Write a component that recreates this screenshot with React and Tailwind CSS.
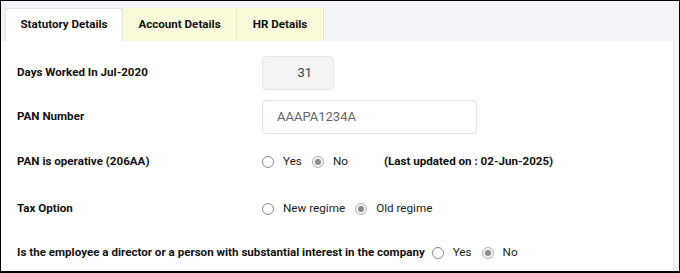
import React from 'react';

const Radio = ({ checked }) => (
  <span
    className={`inline-flex items-center justify-center w-[12px] h-[12px] rounded-full border ${
      checked ? 'border-[#b5b5b5] bg-[#f2f2f2]' : 'border-[#8a8a8a] bg-white'
    }`}
  >
    {checked && <span className="w-[6px] h-[6px] rounded-full bg-[#8d8d8d]" />}
  </span>
);

const RadioGroup = ({ options, value }) => (
  <div className="flex items-center">
    {options.map((opt, i) => (
      <label key={opt} className={`flex items-center gap-[9px] ${i > 0 ? 'ml-[10px]' : ''}`}>
        <Radio checked={opt === value} />
        <span className="text-[11.7px] text-[#222]">{opt}</span>
      </label>
    ))}
  </div>
);

const Row = ({ label, children, className = '' }) => (
  <div className={`flex items-center ${className}`}>
    <div className="w-[245px] shrink-0 text-[11.6px] font-bold text-[#111]">{label}</div>
    {children}
  </div>
);

export default function App() {
  return (
    <div
      className="w-[680px] h-[273px] border-t border-l border-r border-b-2 border-black flex bg-white overflow-hidden"
      style={{ fontFamily: 'Roboto, "Liberation Sans", sans-serif' }}
    >
      <div className="flex-1 flex flex-col">
        {/* Tabs */}
        <div className="h-[40px] bg-[#f3f4f8] flex items-end pl-[4px]">
          <div className="h-[33px] w-[118px] flex items-center justify-center bg-white border border-b-0 border-[#e3e3e3] rounded-t-[3px] text-[11.6px] font-bold text-[#111]">
            Statutory Details
          </div>
          <div className="h-[33px] w-[114px] flex items-center justify-center bg-[#fbfbdc] border-r border-[#ececd0] text-[11.6px] font-bold text-[#111]">
            Account Details
          </div>
          <div className="h-[33px] w-[87px] flex items-center justify-center bg-[#fbfbdc] border-r border-[#ececd0] text-[11.6px] font-bold text-[#111]">
            HR Details
          </div>
        </div>

        {/* Form */}
        <div className="flex-1 pl-[16px] pt-[15px]">
          <Row label="Days Worked In Jul-2020">
            <div className="w-[72px] h-[34px] rounded-[4px] border border-[#e5e7eb] bg-[#f3f4f6] flex items-center justify-end pr-[21px] text-[13px] text-[#444]">
              31
            </div>
          </Row>
          <Row label="PAN Number" className="mt-[10px]">
            <div className="w-[215px] h-[34px] rounded-[4px] border border-[#e2e2e2] bg-white flex items-center pl-[14px] text-[13px] text-[#666]">
              AAAPA1234A
            </div>
          </Row>
          <Row label="PAN is operative (206AA)" className="mt-[19px] h-[18px]">
            <div className="flex items-center">
              <RadioGroup options={['Yes', 'No']} value="No" />
              <span className="ml-[36px] text-[11.6px] font-bold text-[#111]">
                (Last updated on : 02-Jun-2025)
              </span>
            </div>
          </Row>
          <Row label="Tax Option" className="mt-[29px] h-[18px]">
            <RadioGroup options={['New regime', 'Old regime']} value="Old regime" />
          </Row>
          <div className="flex items-center mt-[26px] h-[18px]">
            <span className="text-[11.6px] font-bold text-[#111]">
              Is the employee a director or a person with substantial interest in the company
            </span>
            <div className="ml-[7px]">
              <RadioGroup options={['Yes', 'No']} value="No" />
            </div>
          </div>
        </div>
      </div>
      <div className="w-[6px] flex flex-col">
        <div className="h-[40px] bg-[#f3f4f8]" />
        <div className="flex-1 bg-[#f3f4f8] border-l border-[#e3e5ea]" />
      </div>
    </div>
  );
}
